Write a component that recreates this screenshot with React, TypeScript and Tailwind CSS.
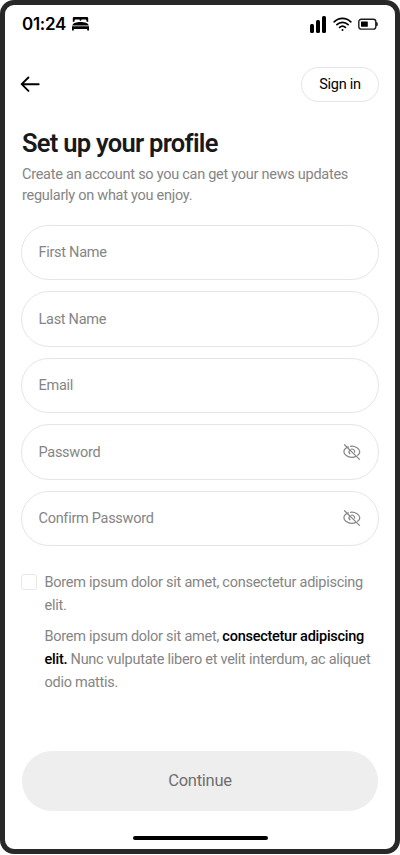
import React from "react";

function BedIcon() {
  return (
    <svg width="17" height="14" viewBox="0 0 17 14" fill="#000">
      <path d="M2 0h13a1.2 1.2 0 0 1 1.2 1.2V5l-1.800-.6V3.200a.7.7 0 0 0-.7-.7H10a.9.9 0 0 0-.9.9v.3H7.900v-.3a.9.9 0 0 0-.9-.9H3.300a.7.7 0 0 0-.7.7v1.200L.8 5V1.200A1.200 1.200 0 0 1 2 0Z" />
      <path d="M.2 8.500C1 5.700 4.500 4.900 8.500 4.900s7.500.8 8.300 3.600Z" />
      <path d="M0 9.300h17v4.300h-1.800v-1.700H1.800v1.700H0Z" />
    </svg>
  );
}

function SignalIcon() {
  return (
    <svg width="16" height="17" viewBox="0 0 16 17" fill="#000">
      <rect x="0" y="8" width="4" height="9" rx="1.500" />
      <rect x="6" y="4" width="4" height="13" rx="1.500" />
      <rect x="12" y="0" width="4" height="17" rx="1.500" />
    </svg>
  );
}

function WifiIcon() {
  return (
    <svg width="19" height="14" viewBox="0 0 19 14" fill="none" stroke="#000" strokeWidth="1.700" strokeLinecap="round">
      <path d="M1.200 4.800C5.800.1 13.200.1 17.800 4.800" />
      <path d="M3.900 7.700c3.200-3.200 8-3.200 11.200 0" />
      <path d="M6.600 10.400c1.700-1.600 4.100-1.600 5.800 0" />
      <circle cx="9.500" cy="12.900" r="1" fill="#000" stroke="none" />
    </svg>
  );
}

function BatteryIcon() {
  return (
    <svg width="20" height="12" viewBox="0 0 20 12" fill="none">
      <rect x=".8" y="1.300" width="17" height="9.800" rx="2.400" stroke="#1c1c1c" strokeWidth="1.400" />
      <rect x="3" y="3.600" width="6.800" height="5.200" rx=".4" fill="#000" />
      <path d="M18.600 4.300c1.100.5 1.100 3.300 0 3.800Z" fill="#111" stroke="#111" strokeWidth=".8" />
    </svg>
  );
}

function BackArrow() {
  return (
    <svg width="20" height="16" viewBox="0 0 20 16" fill="none" stroke="#000" strokeWidth="1.900" strokeLinecap="round" strokeLinejoin="round">
      <path d="M18.700 8.200H1.900M8.400 1.500 1.700 8.200l6.700 6.700" />
    </svg>
  );
}

function EyeOffIcon() {
  return (
    <svg width="18" height="16" viewBox="0 0 18 16" fill="none" stroke="#858585" strokeWidth="1.200" strokeLinecap="round">
      <path d="M5.500 2.900C2.800 3.900.9 6 .9 7.800c0 2.700 3.600 5.500 7.900 5.500 1.500 0 2.900-.3 4.100-.9" />
      <path d="M7.500 2.300c5-.6 9.300 2.700 9.300 5.500 0 1.200-.8 2.500-2.100 3.500" />
      <path d="M6.700 6.100a2.700 2.700 0 0 0 .2 3.700" />
      <path d="M8 5.200a2.700 2.700 0 0 1 3.600 3" />
      <path d="M1.500.7 16.500 15.400" />
    </svg>
  );
}

function Field({ label, secret = false }: { label: string; secret?: boolean }) {
  return (
    <div className="flex h-[55.5px] shrink-0 items-center justify-between rounded-full border border-[#e5e5e5] pr-[17px] pl-[16.5px]">
      <span className="mt-[2px] text-[14.5px] leading-5 tracking-[-0.28px] whitespace-nowrap text-[#858585]">{label}</span>
      {secret && <EyeOffIcon />}
    </div>
  );
}

export default function App() {
  return (
    <div className="h-[855px] w-[400px] bg-white pb-px font-['Roboto',sans-serif]">
      <div className="flex h-[854px] flex-col rounded-[14px] border-[5px] border-[#282828] bg-white">
        <header className="flex h-[38px] shrink-0 items-center justify-between pr-[17px] pl-[17px]">
          <div className="flex items-center gap-[6px]">
            <span className="font-['Inter',sans-serif] text-[17px] leading-5 font-semibold tracking-[-0.3px]">01:24</span>
            <BedIcon />
          </div>
          <div className="flex items-center">
            <SignalIcon />
            <span className="mr-[6px] ml-[7px]">
              <WifiIcon />
            </span>
            <BatteryIcon />
          </div>
        </header>

        <nav className="mt-[23px] flex h-[36px] shrink-0 items-center justify-between pr-[16px] pl-[15px]">
          <BackArrow />
          <button className="h-[35px] w-[78px] rounded-full border border-[#e5e5e5] pt-[2px] text-[14.5px] font-[450] tracking-[-0.25px] text-black">
            Sign in
          </button>
        </nav>

        <section className="mt-[25px] h-[97.5px] shrink-0 pl-[17px] whitespace-nowrap">
          <h1 className="text-[25.5px] leading-[32px] font-semibold tracking-[-0.72px] text-[#18191b]">Set up your profile</h1>
          <p className="mt-[5px] text-[14.5px] leading-[21px] tracking-[-0.27px] text-[#858585]">
            Create an account so you can get your news updates
            <br />
            regularly on what you enjoy.
          </p>
        </section>

        <form className="flex shrink-0 flex-col gap-[11px] px-[16px]">
          <Field label="First Name" />
          <Field label="Last Name" />
          <Field label="Email" />
          <Field label="Password" secret />
          <Field label="Confirm Password" secret />
        </form>

        <section className="mt-[25px] flex shrink-0 pl-[16px] text-[14.5px] leading-[23px] tracking-[-0.26px] whitespace-nowrap text-[#858585]">
          <div className="mt-[3px] mr-[7.5px] size-[16px] shrink-0 rounded-[3px] border border-[#e8e8e8]" />
          <div>
            <p>
              Borem ipsum dolor sit amet, consectetur adipiscing
              <br />
              elit.
            </p>
            <p className="mt-[8px]">
              Borem ipsum dolor sit amet, <span className="font-medium text-black">consectetur adipiscing</span>
              <br />
              <span className="font-medium text-black">elit.</span> Nunc vulputate libero et velit interdum, ac aliquet
              <br />
              odio mattis.
            </p>
          </div>
        </section>

        <footer className="mt-auto flex shrink-0 flex-col items-center px-[17px] pb-[9px]">
          <button className="h-[60px] w-full rounded-full bg-[#eeeeee] pt-px text-[16.5px] font-[450] tracking-[-0.25px] text-[#6f6f6f]">Continue</button>
          <div className="mt-[25px] h-[4px] w-[135px] rounded-full bg-black" />
        </footer>
      </div>
    </div>
  );
}
